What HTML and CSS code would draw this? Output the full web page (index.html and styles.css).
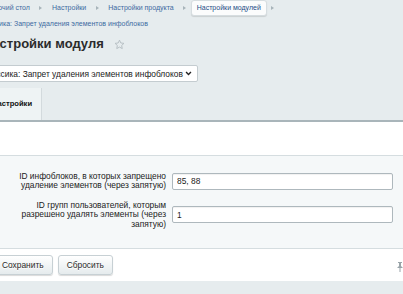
FILE: index.html
```html
<!DOCTYPE html>
<html>

<head>
  <title>Настройки модуля</title>
  <link rel="stylesheet" href="styles.css">
</head>

<body>
  <div class="page">
    <div class="crumbs">
      <span class="crumb">Рабочий стол</span><span class="arrow"></span>
      <span class="crumb">Настройки</span><span class="arrow"></span>
      <span class="crumb">Настройки продукта</span><span class="arrow"></span>
      <span class="crumb current">Настройки модулей</span><span class="arrow"></span>
      <span class="crumb">Классика: Запрет удаления элементов инфоблоков</span>
    </div>

    <h1 class="title">Настройки модуля
      <svg class="star" width="11" height="11" viewBox="0 0 24 24">
        <path d="M12 2.5l2.9 6.2 6.8.8-5 4.7 1.3 6.7L12 17.6l-6 3.3 1.3-6.7-5-4.7 6.8-.8z" fill="none" stroke="#b3bcc1" stroke-width="2" stroke-linejoin="round"/>
      </svg>
    </h1>

    <div class="select">
      <span>Классика: Запрет удаления элементов инфоблоков</span>
      <svg width="7" height="5" viewBox="0 0 10 7">
        <path d="M1.5 1.5l3.5 3.5 3.5-3.5" fill="none" stroke="#222" stroke-width="2"/>
      </svg>
    </div>

    <div class="tabs">
      <div class="tab">Настройки</div>
    </div>

    <div class="tab-body">
      <div class="tab-head"></div>
      <div class="fields">
        <div class="row">
          <label for="iblocks">ID инфоблоков, в которых запрещено удаление элементов (через запятую)</label>
          <input type="text" id="iblocks" value="85, 88">
        </div>
        <div class="row">
          <label for="groups">ID групп пользователей, которым разрешено удалять элементы (через запятую)</label>
          <input type="text" id="groups" value="1">
        </div>
      </div>
      <div class="footer">
        <button class="btn save">Сохранить</button>
        <button class="btn">Сбросить</button>
        <svg class="pin" width="8" height="10" viewBox="0 0 8 10">
          <path d="M2 0h4v1H5v3l2 2H1l2-2V1H2z M3.5 6h1v4h-1z" fill="#9aa4a9"/>
        </svg>
      </div>
    </div>
  </div>
</body>

</html>
```

FILE: styles.css
```css
body {
  margin: 0;
  overflow: hidden;
  background: #e6ecee;
  font-family: "Liberation Sans", Arial, sans-serif;
}

.page {
  margin-left: -20px;
  width: 440px;
}

/* хлебные крошки */
.crumbs {
  display: flex;
  flex-wrap: wrap;
  align-items: center;
  font-size: 7px;
  color: #3d6aa1;
}

.crumb {
  height: 16px;
  line-height: 16px;
  padding: 0 5px;
  box-sizing: border-box;
}

.crumb:first-child {
  margin-left: 1px;
}

.crumb:last-child {
  margin-left: -5px;
}

.crumb.current {
  background: #fbfcfc;
  border: 1px solid #d6dde0;
  border-radius: 3px;
  line-height: 14px;
  color: #1d4c86;
  box-shadow: 0 1px 1px rgba(0, 0, 0, 0.12);
}

.arrow {
  width: 12px;
  height: 16px;
  display: flex;
  align-items: center;
  justify-content: center;
}

.arrow::before {
  content: "";
  border-left: 3px solid #a8b4ba;
  border-top: 2px solid transparent;
  border-bottom: 2px solid transparent;
}

.title {
  margin: 4px 0 0 3px;
  height: 16px;
  line-height: 16px;
  font-size: 13px;
  font-weight: bold;
  color: #2b2b2b;
  display: flex;
  align-items: center;
}

.star {
  margin-left: 10px;
}

.select {
  margin: 13px 0 0 -3px;
  width: 221px;
  height: 17px;
  box-sizing: border-box;
  background: #fff;
  border: 1px solid #c4ccd0;
  border-radius: 2px;
  display: flex;
  align-items: center;
  justify-content: space-between;
  padding: 0 5px 0 4px;
  font-size: 8.4px;
  color: #222;
}

.tabs {
  margin-top: 6px;
  height: 32px;
  display: flex;
  border-bottom: 2px solid #a9b5ba;
}

.tab {
  margin-left: 4px;
  width: 58px;
  padding-left: 8px;
  box-sizing: border-box;
  background: #eef3f4;
  border-right: 1px solid #d3dadd;
  line-height: 32px;
  font-size: 7.6px;
  font-weight: bold;
  color: #111;
}

.tab-head {
  height: 33px;
  background: #fff;
  border-bottom: 1px solid #d5dde0;
}

.fields {
  background: #f5f8f9;
  padding: 16px 0 19px;
  display: flex;
  flex-direction: column;
  gap: 10px;
  border-bottom: 1px solid #d5dde0;
}

.row {
  display: grid;
  grid-template-columns: 186px 221px;
  column-gap: 6px;
  align-items: center;
}

.row label {
  text-align: right;
  font-size: 8.4px;
  line-height: 9.4px;
  color: #222;
  padding-left: 30px;
}

.row input {
  height: 17px;
  box-sizing: border-box;
  border: 1px solid #aeb8bd;
  border-radius: 2px;
  box-shadow: inset 0 1px 1px rgba(0, 0, 0, 0.06);
  padding: 0 4px;
  font-family: "Liberation Sans", Arial, sans-serif;
  font-size: 8.4px;
  color: #222;
}

.footer {
  background: #fff;
  height: 32px;
  display: flex;
  align-items: center;
  gap: 5px;
  padding-left: 13px;
  position: relative;
}

.btn {
  height: 20px;
  padding: 0 8px;
  border: 1px solid #c7d0d4;
  border-radius: 3px;
  background: linear-gradient(#ffffff, #e5ebed);
  box-shadow: 0 1px 1px rgba(0, 0, 0, 0.15);
  font-family: "Liberation Sans", Arial, sans-serif;
  font-size: 8.4px;
  color: #2a2a2a;
  text-shadow: 0 1px #fff;
}

.pin {
  position: absolute;
  left: 416px;
  top: 13px;
}
```
